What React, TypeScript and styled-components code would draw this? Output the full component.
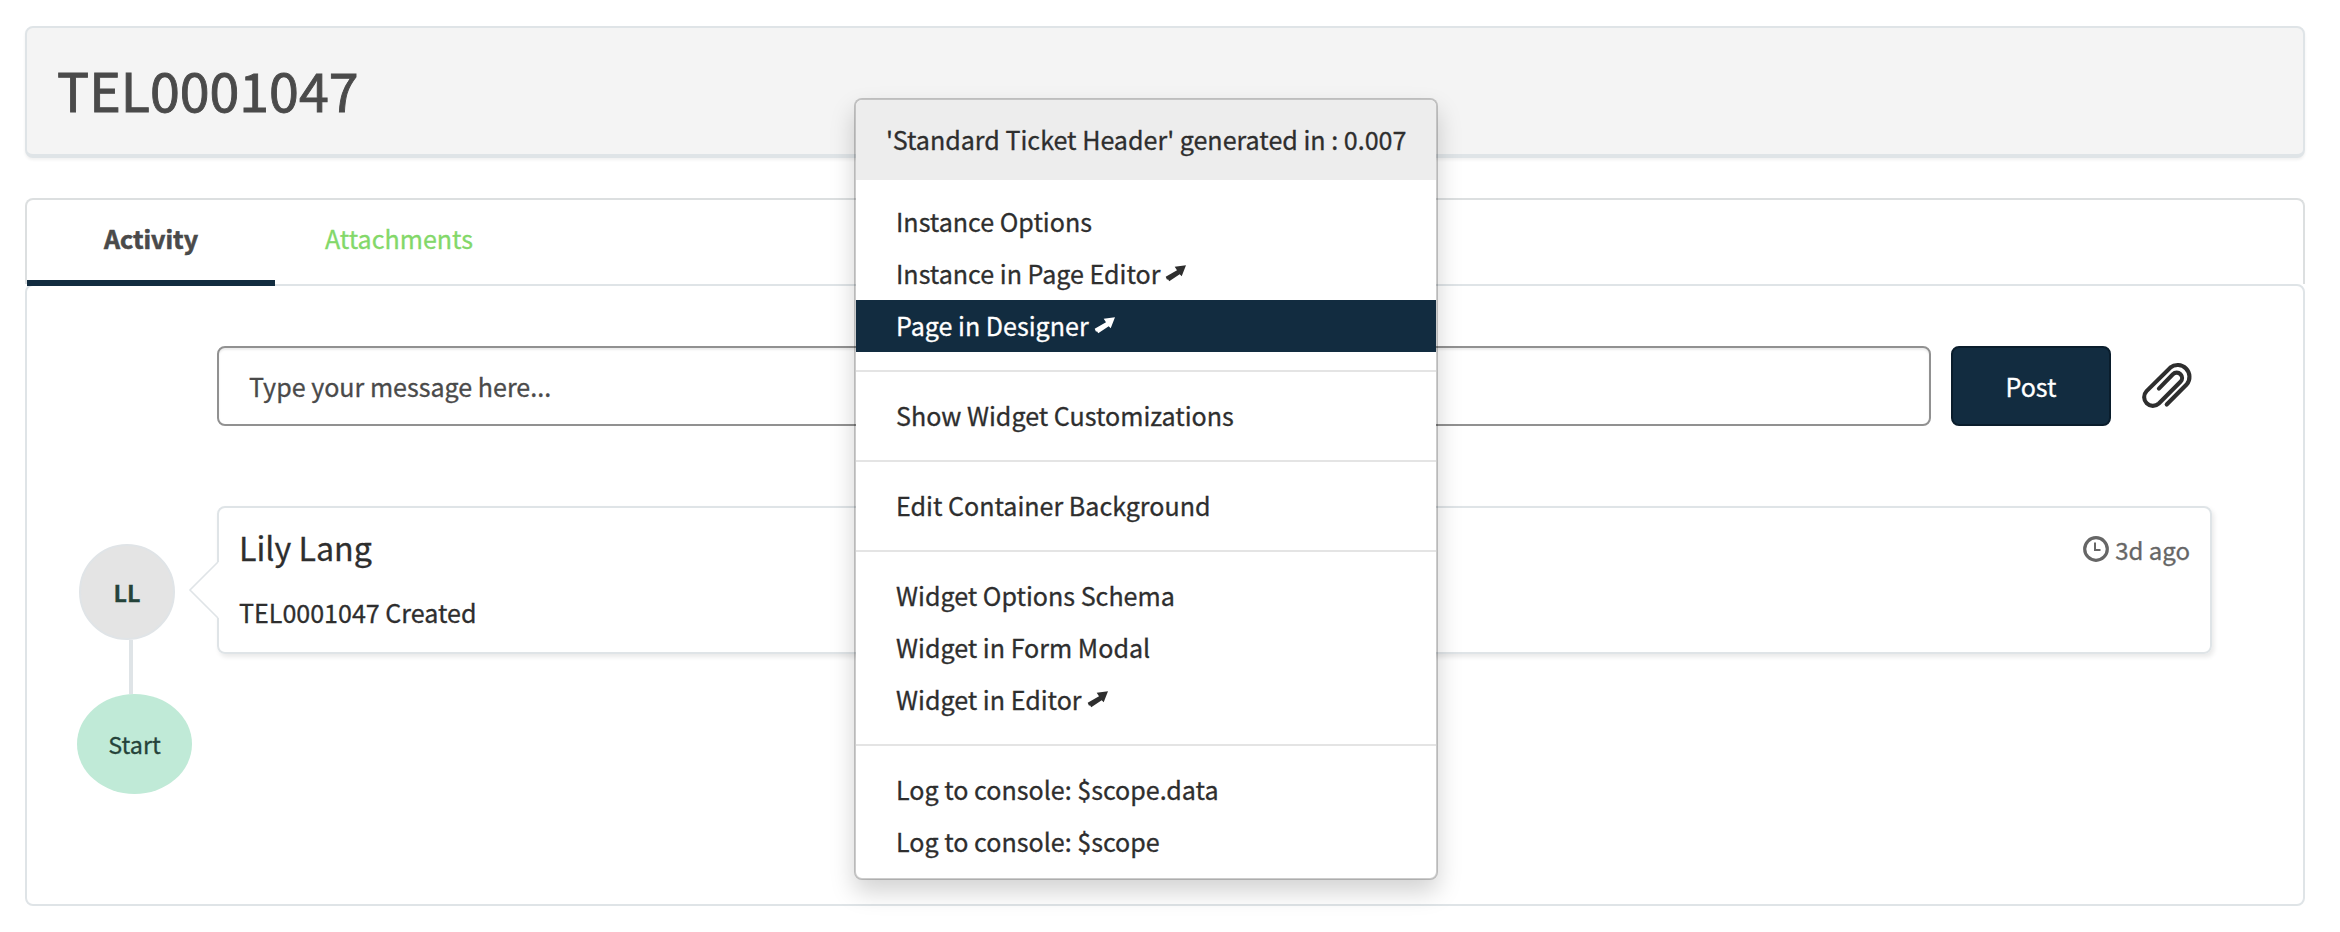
import React from 'react';
import styled, { createGlobalStyle, css } from 'styled-components';

const NAVY = '#122c40';
const LINE = '#dfe4e7';

const GlobalStyle = createGlobalStyle`
  * { box-sizing: border-box; }
  body {
    margin: 0;
    background: #fff;
    font-family: "Noto Sans CJK SC", "Noto Sans", sans-serif;
    font-size: 25.07px;
    line-height: 36px;
    color: #2e2e2e;
    -webkit-text-stroke: 0.3px currentColor;
  }
`;

const Page = styled.main`
  position: relative;
  height: 932px;
  overflow: hidden;
  padding: 26px 35px 0 25px;
`;

const TicketHeader = styled.header`
  height: 132px;
  display: flex;
  align-items: center;
  padding: 0 0 5px 30px;
  border: 2px solid ${LINE};
  border-bottom-width: 4px;
  border-radius: 8px;
  background: #f4f4f4;
  box-shadow: 0 2px 3px rgba(0, 0, 0, 0.06);
`;

const Title = styled.h1`
  margin: 0;
  font-size: 53.7px;
  font-weight: 400;
  line-height: 80px;
  color: #4a4a4a;
  -webkit-text-stroke: 0.9px currentColor;
`;

const Tabs = styled.nav`
  display: flex;
  height: 86px;
  margin-top: 40px;
  border: 2px solid #dcdfe0;
  border-bottom: 0;
  border-radius: 8px 8px 0 0;
`;

const Tab = styled.button<{ $active?: boolean }>`
  width: 248px;
  height: 86px;
  padding: 0 0 10px;
  border: 0;
  background: none;
  font: inherit;
  color: #83d869;
  position: relative;
  z-index: 1;
  ${(p) =>
    p.$active &&
    css`
      color: #4a4a4a;
      font-weight: 700;
      -webkit-text-stroke-width: 0.6px;
      padding: 0 0 4px;
      border-bottom: 6px solid ${NAVY};
    `}
`;

const Panel = styled.section`
  height: 622px;
  border: 2px solid ${LINE};
  border-radius: 8px;
  padding: 60px 91px 0 50px;
`;

const Composer = styled.form`
  display: flex;
  align-items: center;
  margin-left: 140px;
`;

const MessageInput = styled.input`
  width: 1714px;
  height: 80px;
  padding: 0 30px 1px;
  border: 2px solid #919191;
  border-radius: 8px;
  box-shadow: inset 0 2px 2px rgba(0, 0, 0, 0.075);
  font: inherit;
  &::placeholder { color: #4a4a4a; opacity: 1; }
`;

const PostButton = styled.button`
  width: 160px;
  height: 80px;
  margin-left: 20px;
  padding: 0 0 1px;
  border: 2px solid #0a1d2c;
  border-radius: 8px;
  background: ${NAVY};
  color: #fff;
  font: inherit;
`;

const ClipIcon = styled.svg`
  width: 52px;
  height: 48px;
  margin-left: 30px;
  margin-top: -2px;
`;

const Activity = styled.div`
  display: flex;
  align-items: flex-start;
  margin-top: 80px;
`;

const Timeline = styled.div`
  width: 140px;
  display: flex;
  flex-direction: column;
  align-items: flex-start;
  padding-top: 38px;
`;

const Avatar = styled.div`
  width: 96px;
  height: 96px;
  margin-left: 2px;
  display: grid;
  place-items: center;
  border: 2px solid #e0e4e7;
  border-radius: 50%;
  background: #e4e4e4;
  color: #25433a;
  font-size: 23.3px;
  font-weight: 700;
`;

const Connector = styled.div`
  width: 4px;
  height: 54px;
  margin-left: 52px;
  background: ${LINE};
`;

const StartNode = styled.div`
  width: 115px;
  height: 100px;
  display: grid;
  place-items: center;
  border-radius: 50%;
  background: #c0ead7;
  color: #25433a;
  font-size: 23.3px;
`;

const Comment = styled.article`
  position: relative;
  flex: 1;
  height: 148px;
  padding: 20px 20px 0;
  border: 2px solid ${LINE};
  border-radius: 8px;
  box-shadow: 2px 3px 5px rgba(0, 0, 0, 0.09);
`;

const Pointer = styled.svg`
  position: absolute;
  left: -31px;
  top: 53px;
  width: 32px;
  height: 58px;
`;

const CommentTop = styled.div`
  display: flex;
  justify-content: space-between;
  margin-top: -3px;
`;

const Author = styled.h2`
  margin: 0;
  font-size: 32.2px;
  font-weight: 400;
  line-height: 44px;
`;

const Age = styled.span`
  display: flex;
  align-items: center;
  gap: 6px;
  height: 44px;
  padding-top: 6px;
  font-size: 24px;
  color: #666;
`;

const ClockIcon = styled.svg`
  width: 26px;
  height: 26px;
  margin-top: -3px;
`;

const CommentText = styled.p`
  margin: 25px 0 0;
`;

const Menu = styled.div`
  position: absolute;
  left: 854px;
  top: 98px;
  width: 584px;
  border: 2px solid rgba(0, 0, 0, 0.2);
  border-radius: 8px;
  background: #fff;
  background-clip: padding-box;
  box-shadow: 0 12px 24px rgba(0, 0, 0, 0.175);
  overflow: hidden;
`;

const MenuHeader = styled.div`
  height: 80px;
  padding: 21px 0 0 30px;
  background: #ededed;
  white-space: nowrap;
`;

const MenuGroup = styled.ul`
  list-style: none;
  margin: 0;
  padding: 18px 0;
  & + & { border-top: 2px solid #e4e4e4; }
  &:first-of-type { padding-top: 16px; }
  &:last-of-type { padding-bottom: 10px; }
`;

const MenuItem = styled.li<{ $active?: boolean }>`
  display: flex;
  align-items: center;
  gap: 5px;
  height: 52px;
  padding: 0 40px 2px;
  background: ${(p) => (p.$active ? NAVY : 'transparent')};
  color: ${(p) => (p.$active ? '#fff' : '#2e2e2e')};
`;

const ArrowIcon = styled.svg`
  width: 22px;
  height: 18px;
`;

type Entry = { label: string; external?: boolean; active?: boolean };

const groups: Entry[][] = [
  [
    { label: 'Instance Options' },
    { label: 'Instance in Page Editor', external: true },
    { label: 'Page in Designer', external: true, active: true },
  ],
  [{ label: 'Show Widget Customizations' }],
  [{ label: 'Edit Container Background' }],
  [
    { label: 'Widget Options Schema' },
    { label: 'Widget in Form Modal' },
    { label: 'Widget in Editor', external: true },
  ],
  [{ label: 'Log to console: $scope.data' }, { label: 'Log to console: $scope' }],
];

const Arrow = () => (
  <ArrowIcon viewBox="0 0 22 18" aria-hidden="true">
    <path d="M21 1.300 L16.700 12.300 L14.700 10.200 L4.200 17.200 L3.200 15.400 L1.900 15.500 L0.700 12.800 L12 6.300 L9.700 2.700 Z" fill="currentColor" />
  </ArrowIcon>
);

export default function App() {
  return (
    <>
      <GlobalStyle />
      <Page>
        <TicketHeader>
          <Title>TEL0001047</Title>
        </TicketHeader>
        <Tabs>
          <Tab $active>Activity</Tab>
          <Tab>Attachments</Tab>
        </Tabs>
        <Panel>
          <Composer>
            <MessageInput placeholder="Type your message here..." />
            <PostButton type="button">Post</PostButton>
            <ClipIcon viewBox="0 0 52 48" fill="none" stroke="#2e2e2e" strokeWidth="4.1" strokeLinecap="round">
              <path d="M25.700 43.500 L45.800 23.300 A11.800 11.800 0 0 0 29.200 6.700 L5.550 30.150 A8.700 8.700 0 0 0 17.850 42.450 L39.500 20.800 A5.370 5.370 0 0 0 31.900 13.200 L17.900 27.600" />
            </ClipIcon>
          </Composer>
          <Activity>
            <Timeline>
              <Avatar>LL</Avatar>
              <Connector />
              <StartNode>Start</StartNode>
            </Timeline>
            <Comment>
              <Pointer viewBox="0 0 32 58">
                <path d="M30 1 L2 29 L30 57 H32 V1 Z" fill="#fff" />
                <path d="M30 1 L2 29 L30 57" fill="none" stroke={LINE} strokeWidth="1.600" />
              </Pointer>
              <CommentTop>
                <Author>Lily Lang</Author>
                <Age>
                  <ClockIcon viewBox="0 0 26 26" fill="none" stroke="#666">
                    <circle cx="13" cy="13" r="11.300" strokeWidth="3.200" />
                    <path d="M12 6.500 V14 H17.500" strokeWidth="2" />
                  </ClockIcon>
                  3d ago
                </Age>
              </CommentTop>
              <CommentText>TEL0001047 Created</CommentText>
            </Comment>
          </Activity>
        </Panel>
        <Menu>
          <MenuHeader>'Standard Ticket Header' generated in : 0.007</MenuHeader>
          {groups.map((group) => (
            <MenuGroup key={group[0].label}>
              {group.map((item) => (
                <MenuItem key={item.label} $active={item.active}>
                  {item.label}
                  {item.external && <Arrow />}
                </MenuItem>
              ))}
            </MenuGroup>
          ))}
        </Menu>
      </Page>
    </>
  );
}
